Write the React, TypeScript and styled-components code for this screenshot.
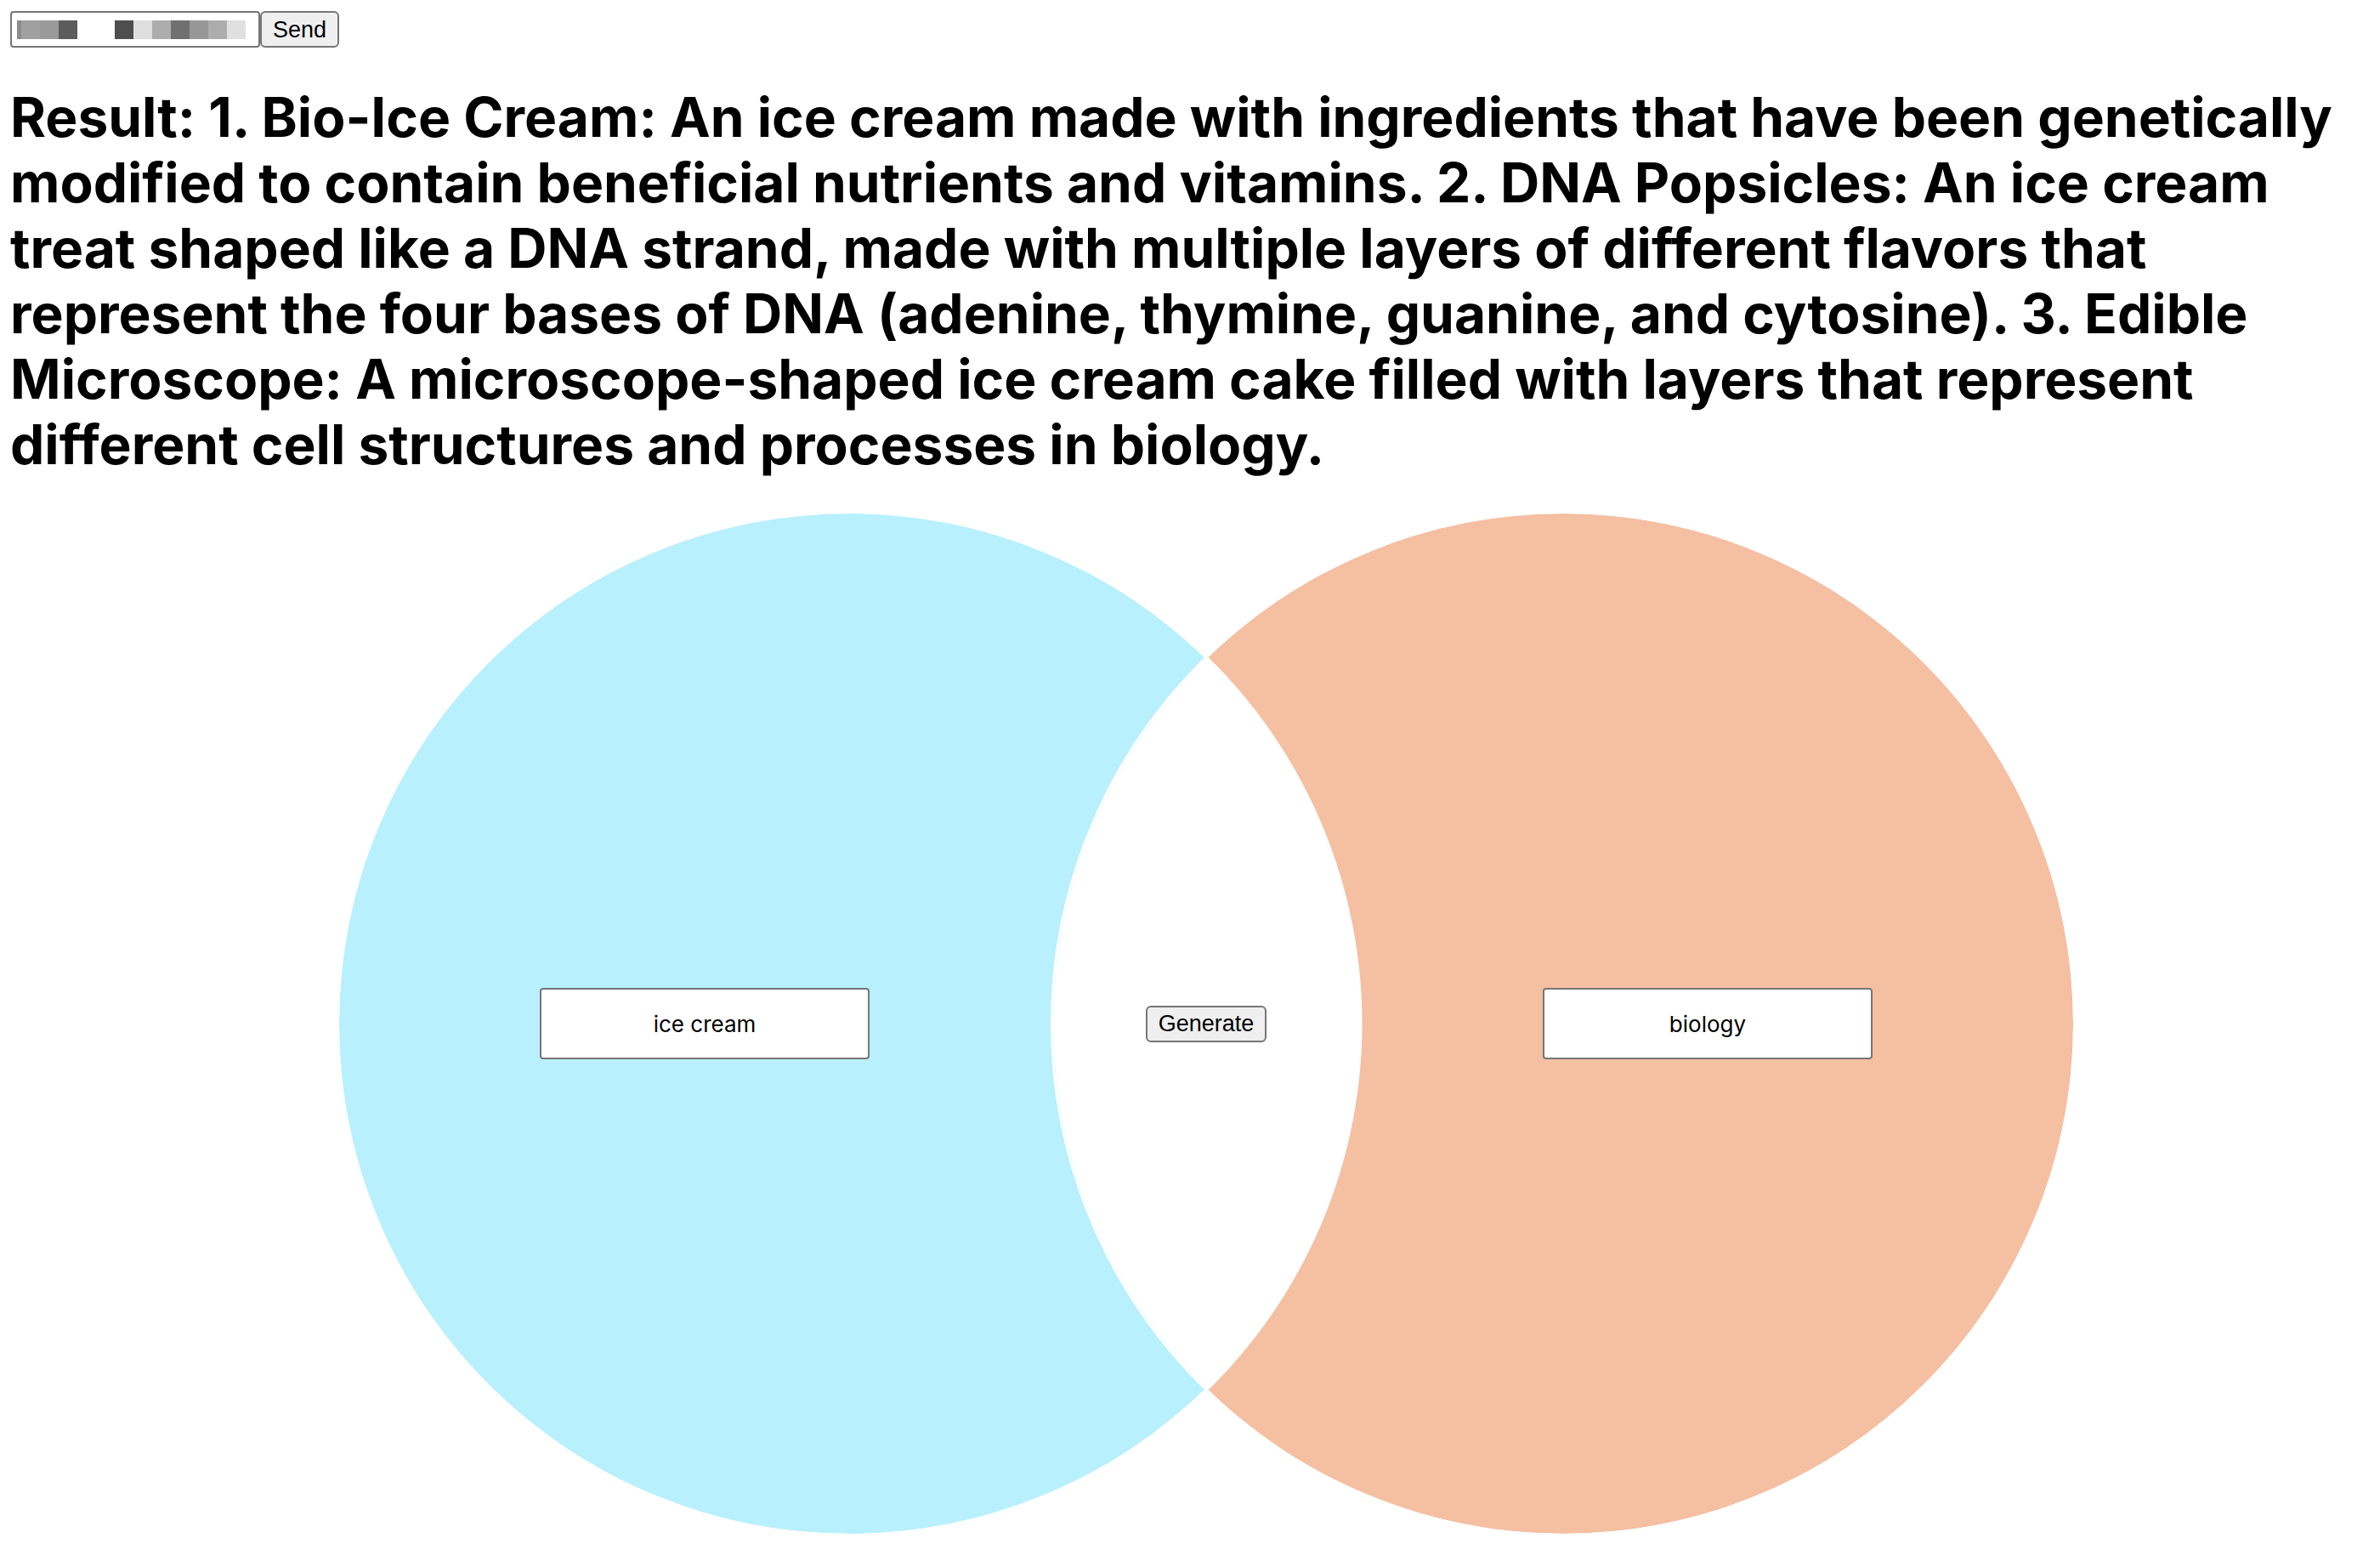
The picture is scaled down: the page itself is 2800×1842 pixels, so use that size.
import React, { useState } from "react";
import styled, { createGlobalStyle, css } from "styled-components";

const GlobalStyle = createGlobalStyle`
  body {
    margin: 0;
    background: #fff;
    color: #000;
    font-family: Inter, "Liberation Sans", sans-serif;
  }
`;

const Page = styled.main`
  display: flex;
  flex-direction: column;
  padding: 13px 12px 32px;
`;

const KeyForm = styled.form`
  display: flex;
`;

const controlFrame = css`
  box-sizing: border-box;
  margin: 0;
  border: 2px solid #767676;
  color: #000;
`;

const Button = styled.button`
  ${controlFrame}
  height: 43px;
  padding: 0 13px;
  border-radius: 6px;
  background: #efefef;
  font: 27px/30px "Liberation Sans", Arial, sans-serif;
`;

const KeyInput = styled.input`
  ${controlFrame}
  width: 294px;
  height: 43px;
  padding: 0 6px;
  border-radius: 4px;
  font: 26px/30px Inter, sans-serif;
  background: #fff
    linear-gradient(
      90deg,
      #8b8b8b 5px,
      #a0a0a0 5px 27px,
      #9a9a9a 27px 49px,
      #5c5c5c 49px 71px,
      #fff 71px 115px,
      #4e4e4e 115px 137px,
      #dedede 137px 159px,
      #adadad 159px 181px,
      #707070 181px 203px,
      #979797 203px 225px,
      #adadad 225px 247px,
      #e0e0e0 247px
    )
    no-repeat 6px 9px / 269px 22px;
`;

const Result = styled.h1`
  margin: 43px 0 40px;
  font-size: 64px;
  line-height: 77px;
  font-weight: 700;
`;

const Venn = styled.form`
  display: grid;
  grid-template-columns: 840px 366px 840px;
  grid-template-rows: 1206px;
  justify-content: center;
  align-items: center;
  padding-left: 38px;
`;

const Circle = styled.div<{ $side: "left" | "right" }>`
  box-sizing: border-box;
  grid-row: 1;
  grid-column: ${(p) => (p.$side === "left" ? "1 / 3" : "2 / 4")};
  display: flex;
  align-items: center;
  justify-content: ${(p) => (p.$side === "left" ? "flex-start" : "flex-end")};
  height: 100%;
  padding: 0 236px;
  border: 3px solid #fff;
  border-radius: 50%;
  background: ${(p) =>
    p.$side === "left"
      ? "#b8f0fd"
      : "radial-gradient(circle at -240px 50%, #fff 603px, #f5bfa2 604px)"};
  background-clip: padding-box;
`;

const TopicInput = styled.input`
  ${controlFrame}
  width: 388px;
  height: 84px;
  padding: 0 20px;
  border-radius: 4px;
  background: #fff;
  text-align: center;
  font: 26px/32px Inter, sans-serif;
`;

const Overlap = styled.div`
  grid-row: 1;
  grid-column: 2;
  display: flex;
  justify-content: center;
  z-index: 1;
`;

const RESULT =
  "1. Bio-Ice Cream: An ice cream made with ingredients that have been genetically modified to contain beneficial nutrients and vitamins. 2. DNA Popsicles: An ice cream treat shaped like a DNA strand, made with multiple layers of different flavors that represent the four bases of DNA (adenine, thymine, guanine, and cytosine). 3. Edible Microscope: A microscope-shaped ice cream cake filled with layers that represent different cell structures and processes in biology.";

export default function App() {
  const [first, setFirst] = useState("ice cream");
  const [second, setSecond] = useState("biology");
  const stay = (e: React.FormEvent) => e.preventDefault();

  return (
    <Page>
      <GlobalStyle />
      <KeyForm onSubmit={stay}>
        <KeyInput type="password" aria-label="Key" autoComplete="off" />
        <Button type="submit">Send</Button>
      </KeyForm>
      <Result>{`Result: ${RESULT}`}</Result>
      <Venn onSubmit={stay}>
        <Circle $side="left">
          <TopicInput
            aria-label="First topic"
            value={first}
            onChange={(e) => setFirst(e.target.value)}
          />
        </Circle>
        <Circle $side="right">
          <TopicInput
            aria-label="Second topic"
            value={second}
            onChange={(e) => setSecond(e.target.value)}
          />
        </Circle>
        <Overlap>
          <Button type="submit">Generate</Button>
        </Overlap>
      </Venn>
    </Page>
  );
}
